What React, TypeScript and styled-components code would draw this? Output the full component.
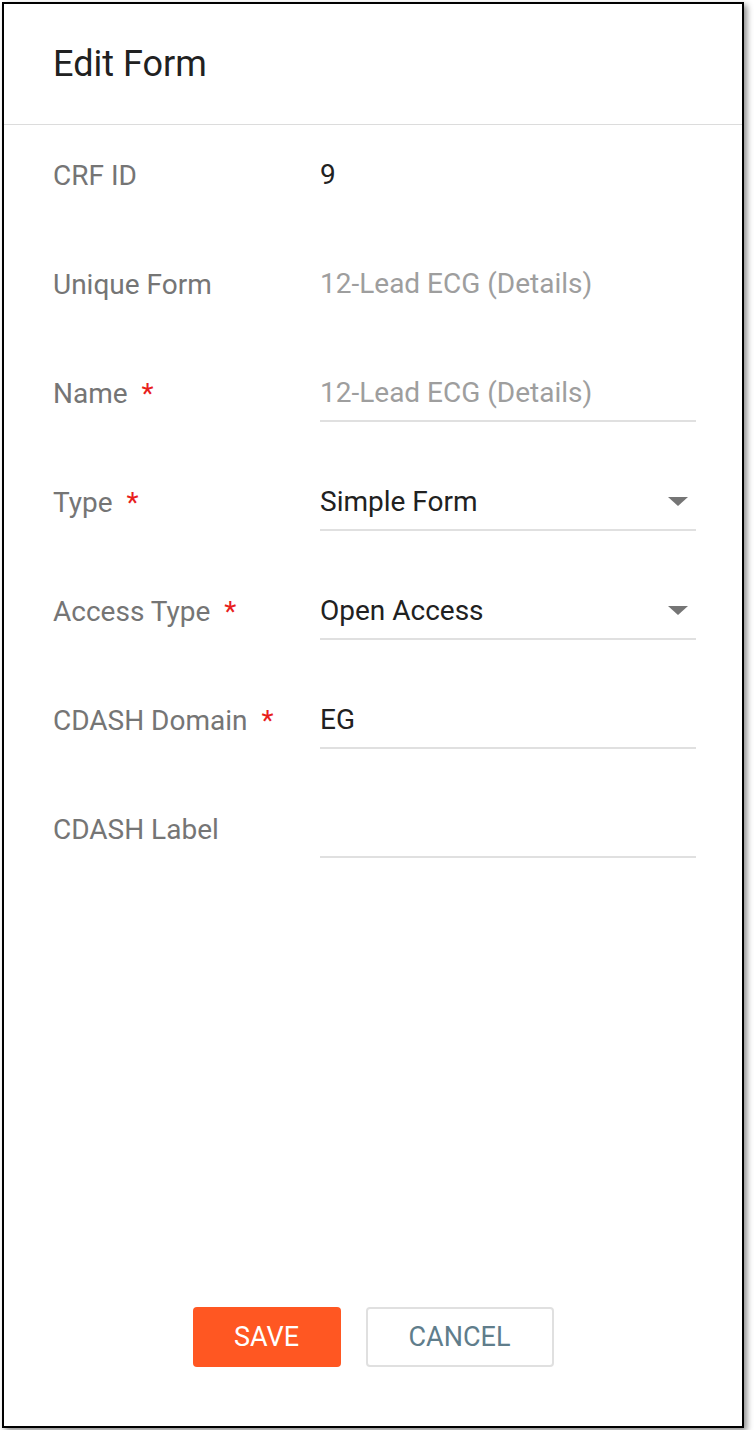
import styled, { createGlobalStyle } from "styled-components";

const GlobalStyle = createGlobalStyle`
  html, body {
    margin: 0;
    padding: 0;
    background: #ffffff;
  }
  body {
    font-family: Roboto, "Liberation Sans", Arial, sans-serif;
  }
`;

const Page = styled.div`
  padding: 2px;
`;

const Frame = styled.div`
  box-sizing: border-box;
  width: 742px;
  height: 1426px;
  border: 2px solid #000;
  background: #fff;
  box-shadow: 3px 3px 6px rgba(0, 0, 0, 0.45);
  display: flex;
  flex-direction: column;
`;

const Header = styled.div`
  height: 120px;
  display: flex;
  align-items: center;
  padding-left: 49px;
  border-bottom: 1px solid #dcdcdc;
`;

const Title = styled.h2`
  margin: 0;
  font-size: 36px;
  font-weight: 400;
  color: #212121;
`;

const Body = styled.div`
  display: flex;
  flex-direction: column;
  gap: 51px;
  padding: 21px 46px 0 49px;
`;

const Row = styled.div`
  display: grid;
  grid-template-columns: 267px 1fr;
  align-items: center;
`;

const Label = styled.div`
  font-size: 28px;
  color: #757575;
  display: flex;
  align-items: center;
`;

const Required = styled.span`
  color: #e8201c;
  margin-left: 14px;
  font-size: 28px;
`;

const Value = styled.div<{ $underline?: boolean; $muted?: boolean }>`
  box-sizing: border-box;
  height: 58px;
  display: flex;
  align-items: center;
  justify-content: space-between;
  font-size: 28px;
  color: ${(p) => (p.$muted ? "#9e9e9e" : "#212121")};
  border-bottom: 2px solid ${(p) => (p.$underline ? "#e0e0e0" : "transparent")};
`;

const Caret = styled.span`
  width: 0;
  height: 0;
  margin-right: 8px;
  border-left: 10px solid transparent;
  border-right: 10px solid transparent;
  border-top: 9px solid #757575;
`;

const Footer = styled.div`
  margin-top: auto;
  display: flex;
  justify-content: center;
  gap: 25px;
  padding-bottom: 59px;
`;

const Button = styled.button<{ $primary?: boolean }>`
  box-sizing: border-box;
  height: 60px;
  width: ${(p) => (p.$primary ? "148px" : "188px")};
  border-radius: 4px;
  font-family: inherit;
  font-size: 27px;
  text-transform: uppercase;
  cursor: pointer;
  background: ${(p) => (p.$primary ? "#ff5722" : "#ffffff")};
  color: ${(p) => (p.$primary ? "#ffffff" : "#607d8b")};
  border: ${(p) => (p.$primary ? "none" : "2px solid #e0e0e0")};
`;

type Field = {
  label: string;
  value: string;
  required?: boolean;
  underline?: boolean;
  muted?: boolean;
  select?: boolean;
};

const fields: Field[] = [
  { label: "CRF ID", value: "9" },
  { label: "Unique Form", value: "12-Lead ECG (Details)", muted: true },
  { label: "Name", value: "12-Lead ECG (Details)", required: true, underline: true, muted: true },
  { label: "Type", value: "Simple Form", required: true, underline: true, select: true },
  { label: "Access Type", value: "Open Access", required: true, underline: true, select: true },
  { label: "CDASH Domain", value: "EG", required: true, underline: true },
  { label: "CDASH Label", value: "", underline: true },
];

export default function App() {
  return (
    <Page>
      <GlobalStyle />
      <Frame>
        <Header>
          <Title>Edit Form</Title>
        </Header>
        <Body>
          {fields.map((f) => (
            <Row key={f.label}>
              <Label>
                {f.label}
                {f.required && <Required>*</Required>}
              </Label>
              <Value $underline={f.underline} $muted={f.muted}>
                <span>{f.value}</span>
                {f.select && <Caret />}
              </Value>
            </Row>
          ))}
        </Body>
        <Footer>
          <Button $primary>Save</Button>
          <Button>Cancel</Button>
        </Footer>
      </Frame>
    </Page>
  );
}
